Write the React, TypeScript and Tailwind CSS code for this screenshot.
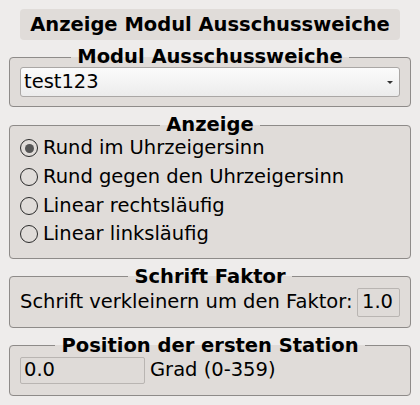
import { useState } from "react";

const options = [
  "Rund im Uhrzeigersinn",
  "Rund gegen den Uhrzeigersinn",
  "Linear rechtsläufig",
  "Linear linksläufig",
];

function Group({ title, className, children }: { title: string; className?: string; children: React.ReactNode }) {
  return (
    <fieldset className={`border border-[#8e8b89] rounded-[4px] bg-[#e0dcd9] px-[10px] ${className ?? ""}`}>
      <legend className="mx-auto px-[6px] font-bold text-[19.5px] leading-[22px] text-black">{title}</legend>
      {children}
    </fieldset>
  );
}

export default function App() {
  const [mode, setMode] = useState(0);

  return (
    <div className="w-[420px] h-[405px] bg-[#eeeceb] pt-[9px] px-[9px] font-['DejaVu_Sans',sans-serif] text-[19.5px] leading-[22px] text-black">
      <div className="mx-[11px] h-[31px] rounded-[4px] bg-[#e0dcd9] flex items-center justify-center font-bold">
        Anzeige Modul Ausschussweiche
      </div>

      {/* Modul */}
      <Group title="Modul Ausschussweiche" className="mt-[6px] pb-[9px]">
        <div className="h-[30px] -mt-[1px] rounded-[3px] border border-[#aaa7a5] bg-gradient-to-b from-[#fbfbfb] to-[#ececec] flex items-center justify-between pl-[3px] pr-[6px]">
          <span>test123</span>
          <span className="w-0 h-0 border-l-[3px] border-r-[3px] border-t-[3px] border-l-transparent border-r-transparent border-t-[#333]" />
        </div>
      </Group>

      {/* Anzeige */}
      <Group title="Anzeige" className="mt-[7px] pb-[9px]">
        <div className="-mt-[2px] flex flex-col">
          {options.map((o, i) => (
            <label key={o} onClick={() => setMode(i)} className="h-[28.7px] flex items-center gap-[5px] cursor-pointer">
              <span className="w-[18px] h-[18px] rounded-full border-[1.5px] border-[#2a2a2a] flex items-center justify-center">
                {mode === i && <span className="w-[9px] h-[9px] rounded-full bg-[#555]" />}
              </span>
              <span>{o}</span>
            </label>
          ))}
        </div>
      </Group>

      {/* Schrift */}
      <Group title="Schrift Faktor" className="mt-[7px] pb-[10px]">
        <div className="h-[29px] flex items-center justify-between">
          <span>Schrift verkleinern um den Faktor:</span>
          <div className="w-[43px] h-[29px] rounded-[2px] border border-[#b9b5b2] bg-[#dfdbd8] flex items-center pl-[4px]">1.0</div>
        </div>
      </Group>

      {/* Position */}
      <Group title="Position der ersten Station" className="mt-[7px] pb-[11px]">
        <div className="h-[27px] flex items-center gap-[5px]">
          <div className="w-[125px] h-[27px] rounded-[2px] border border-[#b9b5b2] bg-[#dfdbd8] flex items-center pl-[3px]">0.0</div>
          <span>Grad (0-359)</span>
        </div>
      </Group>
    </div>
  );
}
